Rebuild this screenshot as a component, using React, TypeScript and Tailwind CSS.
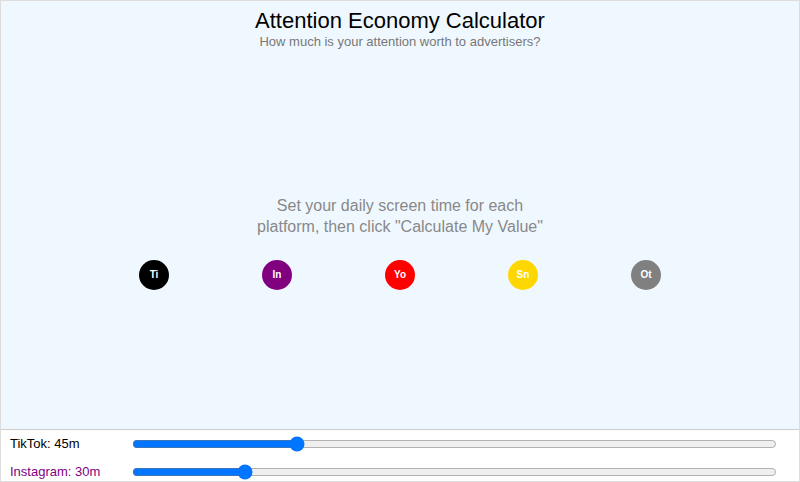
import { useState } from "react";

const platforms = [
  { name: "TikTok", short: "Ti", color: "#000000", minutes: 45 },
  { name: "Instagram", short: "In", color: "#800080", minutes: 30 },
  { name: "YouTube", short: "Yo", color: "#ff0000", minutes: 60 },
  { name: "Snapchat", short: "Sn", color: "#ffd700", minutes: 20 },
  { name: "Other", short: "Ot", color: "#808080", minutes: 30 },
];

export default function App() {
  const [times, setTimes] = useState(platforms.map((p) => p.minutes));

  return (
    <div
      className="w-[800px] h-[482px] overflow-hidden border border-[#dddddd] flex flex-col bg-white"
      style={{ fontFamily: '"Liberation Sans", Arial, sans-serif' }}
    >
      <div className="h-[429px] shrink-0 bg-[#f0f8ff] border-b border-[#cccccc] flex flex-col">
        <div className="text-center pt-[7px]">
          <h1 className="text-[22px] leading-[26px] text-black">
            Attention Economy Calculator
          </h1>
          <p className="text-[13px] leading-[16px] text-[#777777]">
            How much is your attention worth to advertisers?
          </p>
        </div>

        <div className="flex-1 flex flex-col items-center justify-center pt-[5px]">
          <p className="w-[300px] text-center text-[16px] leading-[21px] text-[#888888]">
            Set your daily screen time for each platform, then click "Calculate
            My Value"
          </p>
          <div className="mt-[23px] flex gap-[93px]">
            {platforms.map((p) => (
              <div
                key={p.short}
                className="w-[30px] h-[30px] rounded-full flex items-center justify-center text-white text-[10px] font-bold"
                style={{ backgroundColor: p.color }}
              >
                {p.short}
              </div>
            ))}
          </div>
        </div>
      </div>

      <div className="flex flex-col">
        {platforms.map((p, i) => (
          <div key={p.name} className="h-[28px] flex items-center pl-[9px] pr-[22px]">
            <span className="w-[122px] text-[13px]" style={{ color: p.color }}>
              {p.name}: {times[i]}m
            </span>
            <input
              type="range"
              min={0}
              max={180}
              value={times[i]}
              onChange={(e) => {
                const next = [...times];
                next[i] = Number(e.target.value);
                setTimes(next);
              }}
              className="flex-1"
            />
          </div>
        ))}
      </div>
    </div>
  );
}
